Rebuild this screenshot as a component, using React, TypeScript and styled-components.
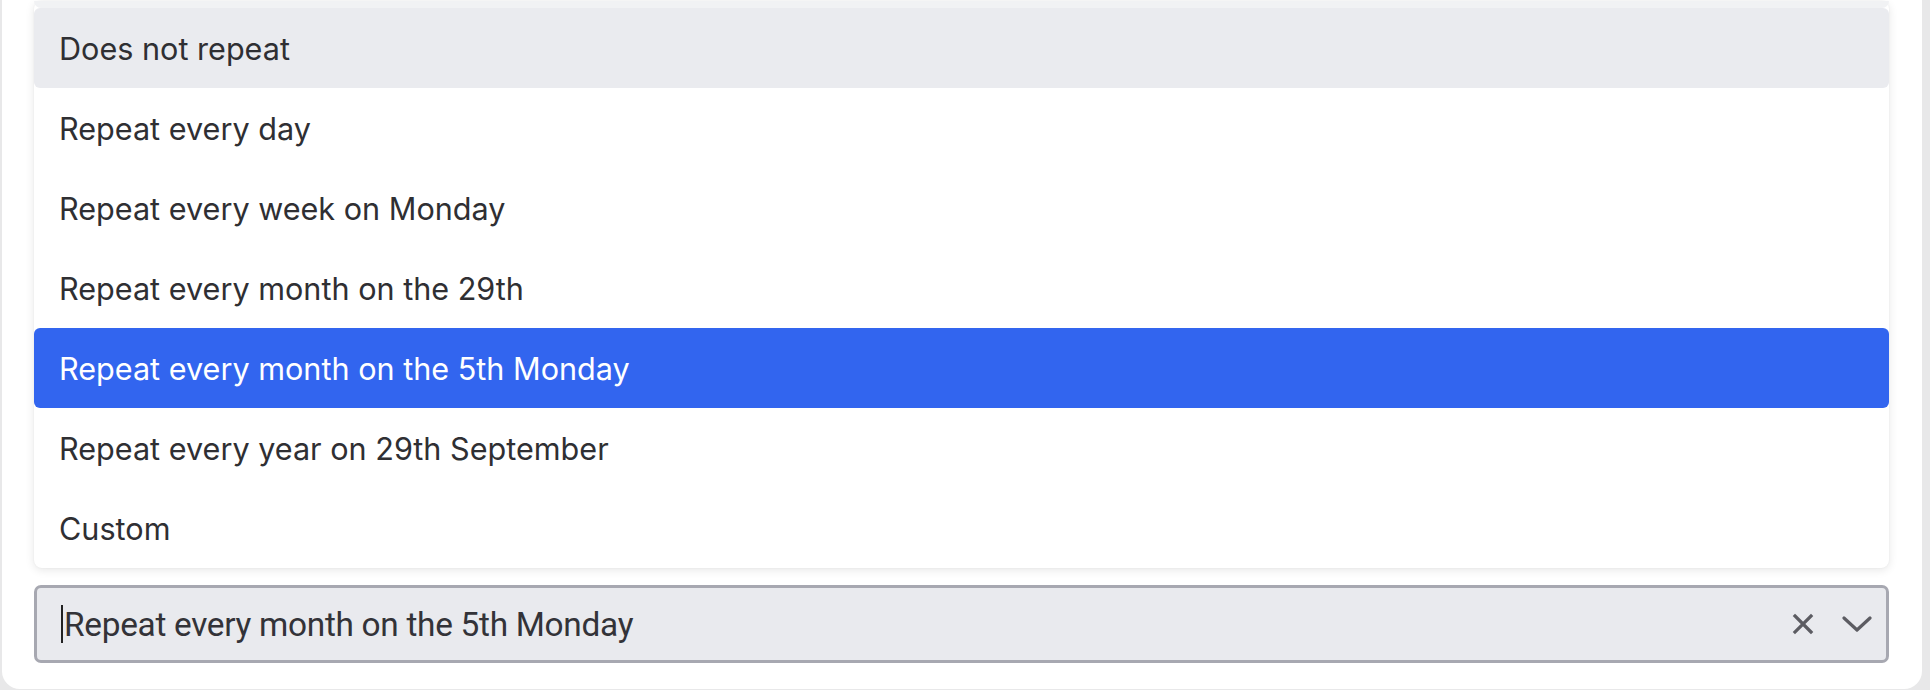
import styled, { createGlobalStyle } from "styled-components";

const GlobalStyle = createGlobalStyle`
  html, body {
    margin: 0;
    padding: 0;
    background-color: #e8e8e9;
    overflow: hidden;
  }
  * {
    box-sizing: border-box;
  }
`;

const Page = styled.div`
  height: 690px;
  padding: 0 8px 0 2px;
`;

const Card = styled.div`
  height: 689px;
  background-color: #ffffff;
  border-radius: 0 0 18px 18px;
  display: flex;
  flex-direction: column;
  justify-content: flex-end;
  gap: 17px;
  padding: 0 33px 26px 32px;
  font-family: Inter, "Noto Sans", sans-serif;
`;

const Menu = styled.ul`
  list-style: none;
  margin: 0;
  padding: 0;
  background-color: #ffffff;
  border-radius: 8px;
  box-shadow: 0 2px 10px rgba(0, 0, 0, 0.1), 0 0 2px rgba(0, 0, 0, 0.05);
`;

const TopEdge = styled.li`
  height: 7px;
  background-color: #f1f2f4;
  border-radius: 0 0 8px 8px;
`;

const Option = styled.li<{ $state?: "hover" | "selected" }>`
  height: 80px;
  display: flex;
  align-items: center;
  padding-left: 25px;
  font-size: 30.6px;
  border-radius: 6px;
  color: ${(p) => (p.$state === "selected" ? "#ffffff" : "#2f2f33")};
  background-color: ${(p) =>
    p.$state === "selected"
      ? "#3265ef"
      : p.$state === "hover"
      ? "#eaebef"
      : "transparent"};
`;

const Control = styled.div`
  height: 78px;
  display: flex;
  align-items: center;
  background-color: #e9eaee;
  border: 3px solid #a7a8b1;
  border-radius: 7px;
  padding: 0 14px 0 24px;
`;

const Caret = styled.span`
  width: 2px;
  height: 38px;
  background-color: #222;
  margin-right: 1px;
`;

const Value = styled.span`
  flex: 1;
  font-family: Roboto, "Liberation Sans", sans-serif;
  font-size: 33.4px;
  letter-spacing: -0.3px;
  color: #333338;
`;

const Icons = styled.div`
  display: flex;
  align-items: center;
  gap: 28px;
  color: #5c5c62;
`;

const options = [
  "Does not repeat",
  "Repeat every day",
  "Repeat every week on Monday",
  "Repeat every month on the 29th",
  "Repeat every month on the 5th Monday",
  "Repeat every year on 29th September",
  "Custom",
];

export default function App() {
  const selected = 4;
  return (
    <>
      <GlobalStyle />
      <Page>
        <Card>
          <Menu>
            <TopEdge />
            {options.map((o, i) => (
              <Option
                key={o}
                $state={i === selected ? "selected" : i === 0 ? "hover" : undefined}
              >
                {o}
              </Option>
            ))}
          </Menu>
          <Control>
            <Caret />
            <Value>{options[selected]}</Value>
            <Icons>
              <svg width="22" height="22" viewBox="0 0 22 22">
                <path
                  d="M3 3 L19 19 M19 3 L3 19"
                  stroke="currentColor"
                  strokeWidth="3.2"
                  strokeLinecap="square"
                />
              </svg>
              <svg width="30" height="18" viewBox="0 0 30 18">
                <path
                  d="M2 3 L15 15 L28 3"
                  stroke="currentColor"
                  strokeWidth="3.2"
                  fill="none"
                  strokeLinecap="round"
                  strokeLinejoin="round"
                />
              </svg>
            </Icons>
          </Control>
        </Card>
      </Page>
    </>
  );
}
